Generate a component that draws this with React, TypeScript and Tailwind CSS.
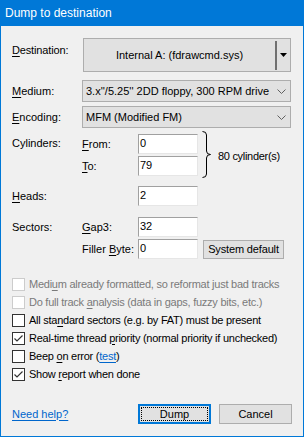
import React from "react";

const font = { fontFamily: '"Liberation Sans", Arial, sans-serif' };

function U({ children }: { children: React.ReactNode }) {
  return <span className="underline underline-offset-[2px]">{children}</span>;
}

function Chevron() {
  return (
    <svg width="9" height="5" viewBox="0 0 9 5" className="shrink-0">
      <polyline points="0.5,0.5 4.5,4.5 8.5,0.5" fill="none" stroke="#606060" strokeWidth="1" />
    </svg>
  );
}

function Combo({ text }: { text: React.ReactNode }) {
  return (
    <div className="flex h-[22px] w-[209px] items-center justify-between border border-[#adadad] bg-[#e1e1e1] pl-[3px] pr-[4px]">
      <span>{text}</span>
      <Chevron />
    </div>
  );
}

function Field({ value }: { value: string }) {
  return (
    <div className="h-[20px] w-[60px] border-l border-t border-[#a0a0a0] border-r-[#e6e6e6] border-b-[#e6e6e6] border-r border-b bg-white pl-[1px] leading-[17px]">
      {value}
    </div>
  );
}

function Check({ checked, disabled, children }: { checked?: boolean; disabled?: boolean; children: React.ReactNode }) {
  return (
    <div className="flex h-[18px] items-center gap-[4px]">
      <div className={`flex h-[13px] w-[13px] items-center justify-center border bg-white ${disabled ? "border-[#cccccc]" : "border-[#333333]"}`}>
        {checked && (
          <svg width="11" height="11" viewBox="0 0 11 11">
            <polyline points="1.5,5.5 4,8 9.5,2.5" fill="none" stroke="#333333" strokeWidth="1.2" />
          </svg>
        )}
      </div>
      <span className={`tracking-[-0.25px] ${disabled ? "text-[#7a7a7a]" : "text-black"}`}>{children}</span>
    </div>
  );
}

export default function App() {
  return (
    <div className="flex h-[437px] w-[304px] flex-col text-[11px] text-black" style={font}>
      <div className="flex h-[26px] items-center bg-[#0078d7] pl-[5px] text-[12px] text-white">
        Dump to destination
      </div>

      <div className="flex flex-1 flex-col border-x border-b border-[#0078d7] bg-[#f0f0f0] pl-[11px]">
        {/* destination */}
        <div className="mt-[12px] flex items-center">
          <span className="w-[71px] -mt-[10px] tracking-[-0.15px]"><U>D</U>estination:</span>
          <div className="flex h-[34px] w-[208px] items-center border border-[#adadad] bg-[#e1e1e1]">
            <span className="flex-1 text-center text-[11px]">Internal A: (fdrawcmd.sys)</span>
            <div className="h-[29px] w-[2px] bg-[#707070]" />
            <svg width="13" height="6" viewBox="0 0 13 6">
              <polygon points="3,1 10,1 6.5,5" fill="#000" />
            </svg>
          </div>
        </div>

        {/* medium / encoding */}
        <div className="mt-[8px] flex items-center">
          <span className="w-[70px]"><U>M</U>edium:</span>
          <Combo text={`3.x''/5.25'' 2DD floppy, 300 RPM drive`} />
        </div>
        <div className="mt-[4px] flex items-center">
          <span className="w-[70px]"><U>E</U>ncoding:</span>
          <Combo text="MFM (Modified FM)" />
        </div>

        {/* cylinders */}
        <div className="mt-[6px] flex">
          <span className="w-[70px] pt-[1px]">Cylinders:</span>
          <div className="flex flex-col gap-[2px]">
            <div className="flex items-center">
              <span className="w-[56px]"><U>F</U>rom:</span>
              <Field value="0" />
            </div>
            <div className="flex items-center">
              <span className="w-[56px]"><U>T</U>o:</span>
              <Field value="79" />
            </div>
          </div>
          <svg width="12" height="48" viewBox="0 0 12 48" className="ml-[3px] -mt-[3px]">
            <path d="M1.5 0.5 Q5.5 0.5 5.5 4 L5.5 20 Q5.5 23.5 9.5 23.5 Q5.5 23.5 5.5 27 L5.5 43 Q5.5 46.5 1.5 46.5" fill="none" stroke="#000" strokeWidth="1" />
          </svg>
          <span className="ml-[5px] mt-[14px] tracking-[-0.3px]">80 cylinder(s)</span>
        </div>

        {/* heads */}
        <div className="mt-[7px] flex items-center">
          <span className="w-[126px]"><U>H</U>eads:</span>
          <Field value="2" />
        </div>

        {/* sectors */}
        <div className="mt-[11px] flex">
          <span className="w-[70px] pt-[2px]">Sectors:</span>
          <div className="flex flex-col gap-[2px]">
            <div className="flex items-center">
              <span className="w-[56px]"><U>G</U>ap3:</span>
              <Field value="32" />
            </div>
            <div className="flex items-center">
              <span className="w-[56px]">Filler <U>B</U>yte:</span>
              <Field value="0" />
              <div className="ml-[5px] flex h-[19px] w-[81px] items-center justify-center border border-[#adadad] bg-[#e1e1e1] tracking-[-0.15px]">
                System default
              </div>
            </div>
          </div>
        </div>

        {/* options */}
        <div className="mt-[16px] flex flex-col">
          <Check disabled>Medi<U>u</U>m already formatted, so reformat just bad tracks</Check>
          <Check disabled>Do full track <U>a</U>nalysis (data in gaps, fuzzy bits, etc.)</Check>
          <Check>All sta<U>n</U>dard sectors (e.g. by FAT) must be present</Check>
          <Check checked>Real-time thread <U>p</U>riority (normal priority if unchecked)</Check>
          <Check>Beep <U>o</U>n error (<a className="text-[#0066cc] underline underline-offset-[2px]">test</a>)</Check>
          <Check checked>Show <U>r</U>eport when done</Check>
        </div>

        {/* footer */}
        <div className="mt-[21px] flex items-center pr-[11px]">
          <a className="flex-1 text-[#0066cc] underline underline-offset-[2px]">Need help?</a>
          <div className="relative flex h-[20px] w-[73px] items-center justify-center border-2 border-[#0078d7] bg-[#e1e1e1]">
            <div className="absolute inset-[1px] border border-dotted border-black" />
            Dump
          </div>
          <div className="ml-[8px] flex h-[20px] w-[73px] items-center justify-center border border-[#adadad] bg-[#e1e1e1]">
            Cancel
          </div>
        </div>
      </div>
    </div>
  );
}
